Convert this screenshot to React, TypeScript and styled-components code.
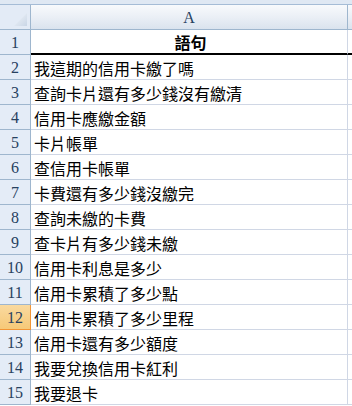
import React from 'react'
import styled, { createGlobalStyle } from 'styled-components'

const GlobalStyle = createGlobalStyle`
  html, body {
    margin: 0;
    padding: 0;
    background: #ffffff;
  }
`

const SheetWrap = styled.div`
  width: 352px;
  height: 406px;
  overflow: hidden;
  background: #ffffff;
  font-family: 'Liberation Serif', 'Noto Sans CJK TC', serif;
`

const TopStrip = styled.div`
  height: 4px;
  background: #dfe8f3;
  border-bottom: 1px solid #a5bcd6;
`

const Row = styled.div<{ h: number }>`
  display: flex;
  height: ${(p) => p.h}px;
`

const Corner = styled.div`
  position: relative;
  width: 31px;
  flex: none;
  box-sizing: border-box;
  background: #e3ebf6;
  border-right: 1px solid #9eb6ce;
  border-bottom: 1px solid #9eb6ce;
`

const CornerTriangle = styled.svg`
  position: absolute;
  right: 3px;
  bottom: 3px;
`

const ColHeader = styled.div`
  width: 317px;
  flex: none;
  box-sizing: border-box;
  display: flex;
  align-items: center;
  justify-content: center;
  padding-top: 2px;
  font-size: 16px;
  color: #27415f;
  background: linear-gradient(#f8fafc, #e9eef5 55%, #dae3ee);
  border-right: 1px solid #9eb6ce;
  border-bottom: 1px solid #9eb6ce;
`

const ColHeaderRest = styled.div`
  flex: 1;
  box-sizing: border-box;
  background: linear-gradient(#f8fafc, #e9eef5 55%, #dae3ee);
  border-bottom: 1px solid #9eb6ce;
`

const RowHeader = styled.div<{ selected?: boolean }>`
  width: 31px;
  flex: none;
  box-sizing: border-box;
  display: flex;
  align-items: center;
  justify-content: center;
  padding-top: 1px;
  font-size: 16px;
  color: #27415f;
  background: ${(p) => (p.selected ? 'linear-gradient(#f9d99f, #f6c978)' : '#e4ecf7')};
  border-right: 1px solid ${(p) => (p.selected ? '#f29536' : '#9eb6ce')};
  border-bottom: 1px solid ${(p) => (p.selected ? '#f29536' : '#9eb6ce')};
`

const Cell = styled.div<{ header?: boolean }>`
  width: 317px;
  flex: none;
  box-sizing: border-box;
  display: flex;
  align-items: center;
  justify-content: ${(p) => (p.header ? 'center' : 'flex-start')};
  padding: 1px 0 0 3px;
  font-family: 'Noto Sans CJK TC', sans-serif;
  font-size: 16px;
  font-weight: ${(p) => (p.header ? 700 : 400)};
  color: #000000;
  white-space: nowrap;
  overflow: hidden;
  border-right: 1px solid #d0d7e5;
  border-bottom: ${(p) => (p.header ? '2px solid #000000' : '1px solid #d0d7e5')};
`

const CellRest = styled.div<{ header?: boolean }>`
  flex: 1;
  box-sizing: border-box;
  border-bottom: ${(p) => (p.header ? '2px solid #000000' : '1px solid #d0d7e5')};
`

const phrases = [
  '我這期的信用卡繳了嗎',
  '查詢卡片還有多少錢沒有繳清',
  '信用卡應繳金額',
  '卡片帳單',
  '查信用卡帳單',
  '卡費還有多少錢沒繳完',
  '查詢未繳的卡費',
  '查卡片有多少錢未繳',
  '信用卡利息是多少',
  '信用卡累積了多少點',
  '信用卡累積了多少里程',
  '信用卡還有多少額度',
  '我要兌換信用卡紅利',
  '我要退卡',
]

export default function App() {
  return (
    <SheetWrap>
      <GlobalStyle />
      <TopStrip />
      <Row h={25}>
        <Corner>
          <CornerTriangle width="13" height="13" viewBox="0 0 13 13">
            <defs>
              <linearGradient id="tri" x1="0" y1="0" x2="1" y2="1">
                <stop offset="0" stopColor="#f4f7fb" />
                <stop offset="1" stopColor="#c9d6e6" />
              </linearGradient>
            </defs>
            <polygon points="13,0 13,13 0,13" fill="url(#tri)" />
          </CornerTriangle>
        </Corner>
        <ColHeader>A</ColHeader>
        <ColHeaderRest />
      </Row>
      <Row h={25}>
        <RowHeader>1</RowHeader>
        <Cell header>語句</Cell>
        <CellRest header />
      </Row>
      {phrases.map((text, i) => (
        <Row h={25} key={i}>
          <RowHeader selected={i + 2 === 12}>{i + 2}</RowHeader>
          <Cell>{text}</Cell>
          <CellRest />
        </Row>
      ))}
    </SheetWrap>
  )
}
